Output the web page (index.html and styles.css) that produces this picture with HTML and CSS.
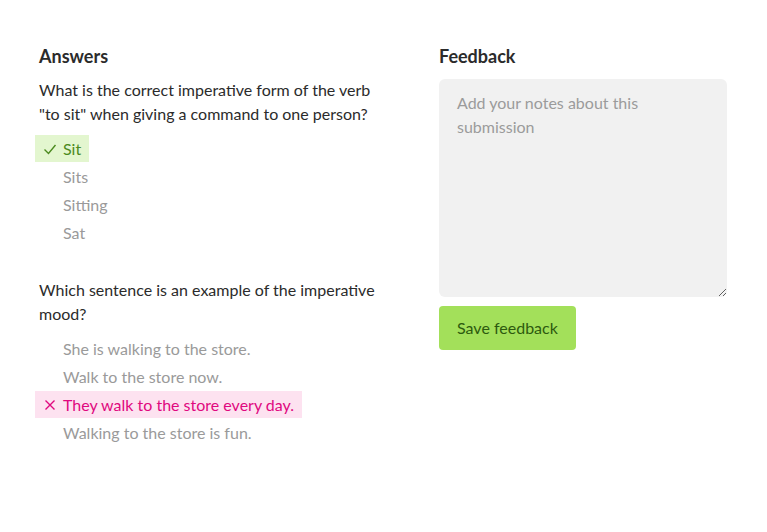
FILE: index.html
```html
<!DOCTYPE html>
<html lang="en">
<head>
<meta charset="utf-8">
<title>Review</title>
<link rel="stylesheet" href="styles.css">
</head>
<body>
<main class="page">
  <section class="answers">
    <h2 class="heading">Answers</h2>
    <div class="question">
      <p class="prompt">What is the correct imperative form of the verb "to sit" when giving a command to one person?</p>
      <ul class="options">
        <li class="option correct"><span class="mark"><svg width="14" height="14" viewBox="0 0 14 14"><path d="M1.5 7.5 L5.5 11.5 L12.5 3" fill="none" stroke="currentColor" stroke-width="1.4"/></svg></span>Sit</li>
        <li class="option"><span class="mark"></span>Sits</li>
        <li class="option"><span class="mark"></span>Sitting</li>
        <li class="option"><span class="mark"></span>Sat</li>
      </ul>
    </div>
    <div class="question">
      <p class="prompt">Which sentence is an example of the imperative mood?</p>
      <ul class="options">
        <li class="option"><span class="mark"></span>She is walking to the store.</li>
        <li class="option"><span class="mark"></span>Walk to the store now.</li>
        <li class="option wrong"><span class="mark"><svg width="14" height="14" viewBox="0 0 14 14"><path d="M2.5 2.5 L11.5 11.5 M11.5 2.5 L2.5 11.5" fill="none" stroke="currentColor" stroke-width="1.4"/></svg></span>They walk to the store every day.</li>
        <li class="option"><span class="mark"></span>Walking to the store is fun.</li>
      </ul>
    </div>
  </section>
  <section class="feedback">
    <h2 class="heading">Feedback</h2>
    <textarea class="notes" placeholder="Add your notes about this submission"></textarea>
    <button class="save" type="button">Save feedback</button>
  </section>
</main>
</body>
</html>
```
FILE: styles.css
```css
* { box-sizing: border-box; }
html, body { margin: 0; padding: 0; background: #fff; }
body {
  font-family: Lato, "Liberation Sans", sans-serif;
  font-size: 16px;
  line-height: 24px;
  color: #2b2b2b;
}
.page {
  display: grid;
  grid-template-columns: 345px 288px;
  column-gap: 55px;
  padding: 44px 40px 0 39px;
}
.heading {
  margin: 0 0 10px;
  font-size: 18px;
  line-height: 24px;
  font-weight: 700;
  color: #2b2b2b;
}
.prompt { margin: 0 0 9px; }
.question + .question { margin-top: 32px; }
.options {
  list-style: none;
  margin: 0;
  padding: 0;
  display: flex;
  flex-direction: column;
  gap: 1px;
}
.option {
  display: flex;
  align-items: center;
  align-self: flex-start;
  margin-left: -4px;
  padding: 2px 8px 1px 8px;
  color: #9a9a9a;
  line-height: 24px;
}
.mark {
  width: 20px;
  display: inline-flex;
  align-items: center;
}
.option.correct { background: #e3f6cf; color: #4b8a1e; }
.option.wrong { background: #fde2f0; color: #e0087f; }
.notes {
  display: block;
  width: 100%;
  height: 218px;
  margin: 11px 0 9px;
  padding: 12px 18px;
  border: 0;
  border-radius: 6px;
  background: #f1f1f1;
  font: inherit;
  color: #2b2b2b;
  resize: vertical;
}
.notes::placeholder { color: #9b9b9b; }
.save {
  display: block;
  height: 44px;
  padding: 0 18px;
  border: 0;
  border-radius: 4px;
  background: #a3e05a;
  color: #2d5a0f;
  font: inherit;
  font-size: 16px;
}
```
